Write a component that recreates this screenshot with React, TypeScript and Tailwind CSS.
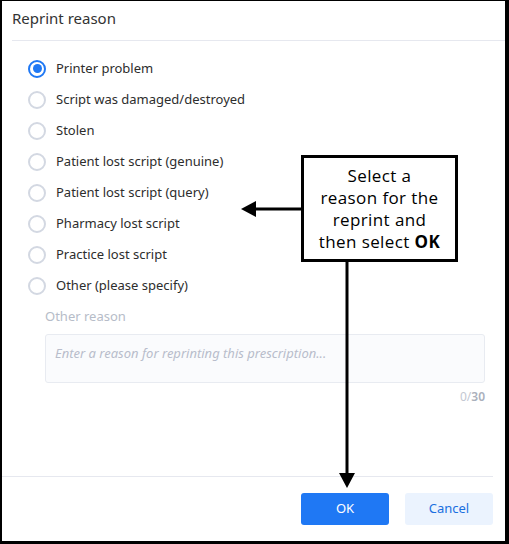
import { useState } from "react";

const REASONS = [
  "Printer problem",
  "Script was damaged/destroyed",
  "Stolen",
  "Patient lost script (genuine)",
  "Patient lost script (query)",
  "Pharmacy lost script",
  "Practice lost script",
  "Other (please specify)",
];

function Radio({ checked }: { checked: boolean }) {
  return checked ? (
    <span className="flex size-[18px] items-center justify-center rounded-full border-2 border-[#1f78f4]">
      <span className="size-[9px] rounded-full bg-[#1f78f4]" />
    </span>
  ) : (
    <span className="size-[18px] rounded-full border-2 border-[#d3d8e2]" />
  );
}

export default function App() {
  const [selected] = useState(0);

  return (
    <div className="relative h-[544px] w-[509px] border-t border-l-2 border-r-4 border-b-[3px] border-black bg-white font-['Noto_Sans',sans-serif] text-[#2d2d2d]">
      <div className="flex h-full flex-col">
        <div className="ml-[10px] flex h-[40px] items-start border-b border-[#e6e8ef] pt-[6px] text-[15px] text-[#333]">
          Reprint reason
        </div>

        <div className="flex-1 pl-[26px] pt-[12px]">
          <ul>
            {REASONS.map((r, i) => (
              <li key={r} className="flex h-[31px] items-center gap-[10px] text-[13px]">
                <Radio checked={i === selected} />
                <span>{r}</span>
              </li>
            ))}
          </ul>
          <div className="ml-[17px] mr-[20px] mt-[6px]">
            <div className="text-[13px] leading-[18px] text-[#b6bcc8]">Other reason</div>
            <div className="mt-[9px] flex h-[49px] items-start rounded-[3px] border border-[#e8ebf1] bg-[#fafbfd] pl-[9px] pt-[9px] text-[13px] italic text-[#b8bdcb]">
              Enter a reason for reprinting this prescription...
            </div>
            <div className="mt-[7px] text-right text-[12px] leading-[14px] text-[#c3c8d2]">
              0/<span className="font-semibold text-[#aab0bc]">30</span>
            </div>
          </div>
        </div>

        <div className="mr-[12px] border-t border-[#e6e8ef]" />
        <div className="flex justify-end gap-[16px] pb-[16px] pr-[12px] pt-[16px]">
          <button className="h-[32px] w-[88px] rounded-[3px] bg-[#1f78f4] text-[13px] text-white">
            OK
          </button>
          <button className="h-[32px] w-[88px] rounded-[3px] bg-[#ebf3fe] text-[13px] text-[#1a6fe0]">
            Cancel
          </button>
        </div>
      </div>

      <svg className="pointer-events-none absolute left-[-2px] top-[-1px]" width="509" height="544">
        <line x1="302" y1="209" x2="254" y2="209" stroke="black" strokeWidth="3" />
        <polygon points="241,209 256,201 256,217" fill="black" />
        <line x1="347" y1="262" x2="347" y2="475" stroke="black" strokeWidth="3" />
        <polygon points="347,488 339,473 355,473" fill="black" />
      </svg>

      <div className="absolute left-[299px] top-[154px] flex h-[107px] w-[157px] flex-col items-center justify-center border-[3px] border-black bg-white text-center font-['Open_Sans',sans-serif] text-[17px] leading-[22px] tracking-[0.4px] text-black">
        <span>Select a</span>
        <span>reason for the</span>
        <span>reprint and</span>
        <span>
          then select <b>OK</b>
        </span>
      </div>
    </div>
  );
}
